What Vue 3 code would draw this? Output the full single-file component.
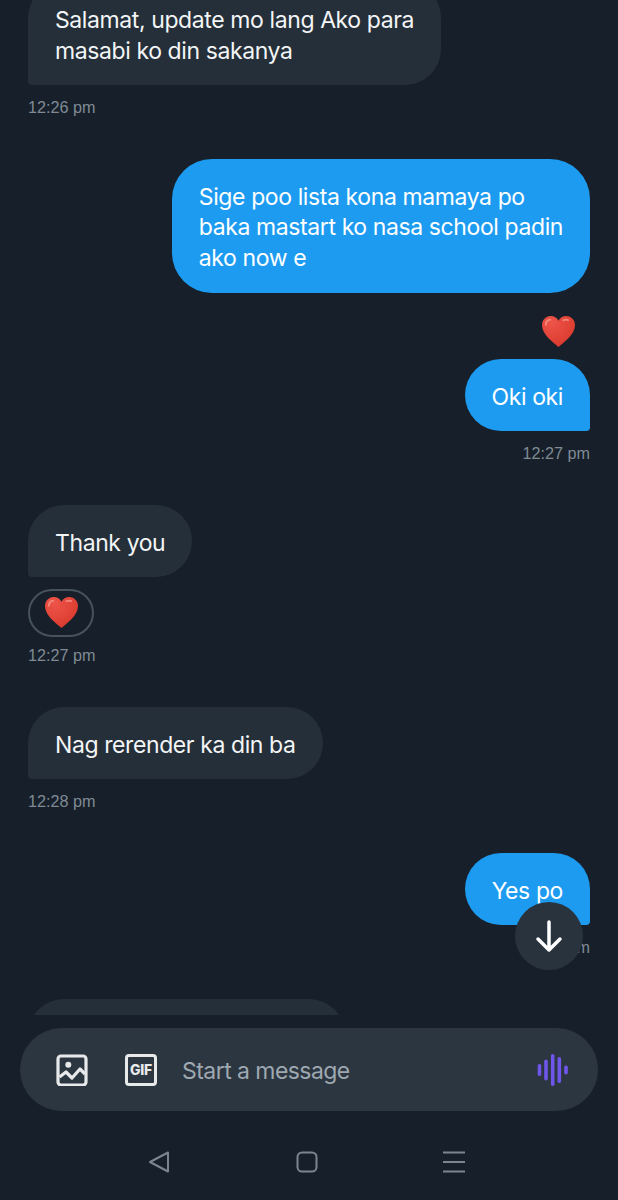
<script setup>
const messages = [
  { id: 1, side: 'in', lines: ['Salamat, update mo lang Ako para', 'masabi ko din sakanya'], time: '12:26 pm', cls: 'first' },
  { id: 2, side: 'out', lines: ['Sige poo lista kona mamaya po', 'baka mastart ko nasa school padin', 'ako now e'], round: true },
  { id: 3, side: 'out', lines: ['Oki oki'], time: '12:27 pm', heartAbove: true },
  { id: 4, side: 'in', lines: ['Thank you'], time: '12:27 pm', pill: true },
  { id: 5, side: 'in', lines: ['Nag rerender ka din ba'], time: '12:28 pm' },
  { id: 6, side: 'out', lines: ['Yes po'], time: '12:28 pm' },
]
const bars = [
  { x: 2.5, h: 12 },
  { x: 9, h: 21 },
  { x: 15.700, h: 32 },
  { x: 22.300, h: 26 },
  { x: 29, h: 9 },
]
</script>

<template>
  <div class="screen">
    <div class="thread">
      <div
        v-for="m in messages"
        :key="m.id"
        class="msg"
        :class="[m.side, m.cls]"
      >
        <svg v-if="m.heartAbove" class="heart above" viewBox="0 0 36 34"><use href="#heart" /></svg>
        <div class="bubble" :class="{ round: m.round }">
          <div v-for="l in m.lines" :key="l">{{ l }}</div>
        </div>
        <div v-if="m.pill" class="pill">
          <svg class="heart" viewBox="0 0 36 34"><use href="#heart" /></svg>
        </div>
        <div v-if="m.time" class="time">{{ m.time }}</div>
      </div>
      <div class="bubble partial"></div>
    </div>

    <button class="scroll-down" aria-label="Scroll down">
      <svg width="30" height="34" viewBox="0 0 30 34" fill="none" stroke="#fff" stroke-width="3.500" stroke-linecap="round" stroke-linejoin="round">
        <path d="M15 3V31M4 20L15 31L26 20" />
      </svg>
    </button>

    <div class="composer">
      <svg class="icon" width="32" height="32" viewBox="0 0 32 32" fill="none" stroke="#e7e9ea" stroke-width="3.200" stroke-linejoin="round">
        <rect x="2" y="2" width="28" height="29" rx="3" />
        <circle cx="12.300" cy="10.700" r="3" fill="#e7e9ea" stroke="none" />
        <path d="M3.500 23L10 18L16 24L24 15L29 20" />
      </svg>
      <div class="gif"><span>GIF</span></div>
      <div class="placeholder">Start a message</div>
      <svg class="voice" width="32" height="36" viewBox="0 0 32 36" fill="none" stroke="#6f56ea" stroke-width="3.600" stroke-linecap="round">
        <line v-for="b in bars" :key="b.x" :x1="b.x" :x2="b.x" :y1="18 - b.h / 2 + 1.800" :y2="18 + b.h / 2 - 1.800" />
      </svg>
    </div>

    <div class="navbar">
      <svg width="24" height="24" viewBox="0 0 24 24" fill="none" stroke="#7c858e" stroke-width="2" stroke-linejoin="round">
        <path d="M21 2.500V21.500L3 12Z" />
      </svg>
      <svg width="24" height="24" viewBox="0 0 24 24" fill="none" stroke="#7c858e" stroke-width="2">
        <rect x="2.500" y="2.500" width="19" height="19" rx="4.500" />
      </svg>
      <svg width="24" height="24" viewBox="0 0 24 24" fill="none" stroke="#7c858e" stroke-width="2">
        <path d="M1 2.500H23M1 12H23M1 21.500H23" />
      </svg>
    </div>

    <svg class="defs" width="0" height="0">
      <defs>
        <radialGradient id="heartFill" cx="0.3" cy="0.2" r="0.9">
          <stop offset="0" stop-color="#ee5448" />
          <stop offset="1" stop-color="#d9382c" />
        </radialGradient>
        <symbol id="heart" viewBox="0 0 36 34">
          <path d="M18 33C12 27.500 1 20 1 10.500C1 4.500 5.500 1 10 1C13.500 1 16.500 3 18 6C19.500 3 22.500 1 26 1C30.500 1 35 4.500 35 10.500C35 20 24 27.500 18 33Z" fill="url(#heartFill)" />
          <path d="M5 10C5 7 7 5 9.500 4.800" fill="none" stroke="#f3867b" stroke-width="2" stroke-linecap="round" />
          <path d="M23 5.500C24.500 4.700 26.500 4.600 28 5.300" fill="none" stroke="#f3867b" stroke-width="1.800" stroke-linecap="round" />
        </symbol>
      </defs>
    </svg>
  </div>
</template>

<style>
body {
  background: #17202a;
}
</style>

<style scoped>
.screen {
  position: relative;
  width: 618px;
  height: 1200px;
  display: flex;
  flex-direction: column;
  overflow: hidden;
  background: #17202a;
  font-family: Inter, "Liberation Sans", sans-serif;
}
.thread {
  height: 1015px;
  padding: 0 28px;
  box-sizing: border-box;
  overflow: hidden;
  flex-shrink: 0;
}
.msg {
  display: flex;
  flex-direction: column;
  margin-bottom: 42px;
}
.msg.first {
  margin-top: -18px;
}
.msg.in {
  align-items: flex-start;
}
.msg.out {
  align-items: flex-end;
}
.msg:has(.round) {
  margin-bottom: 21px;
}
.bubble {
  padding: 23px 27px 18.500px;
  font-size: 23px;
  letter-spacing: -0.4px;
  line-height: 30.500px;
  color: #f3f5f6;
  white-space: nowrap;
}
.in .bubble {
  background: #252f39;
  border-radius: 36px 36px 36px 4px;
}
.out .bubble {
  background: #1d9bf0;
  color: #fff;
  border-radius: 36px 36px 4px 36px;
}
.out .bubble.round {
  padding-bottom: 19.500px;
  border-radius: 40px;
}
.bubble.partial {
  width: 317px;
  height: 72px;
  padding: 0;
  background: #252f39;
  border-radius: 36px;
}
.time {
  margin-top: 12px;
  font-size: 16.200px;
  line-height: 20px;
  color: #7f8a94;
  font-family: "Liberation Sans", sans-serif;
}
.heart {
  width: 35px;
  height: 33px;
  display: block;
}
.heart.above {
  margin: 1px 14px 11px 0;
}
.pill {
  margin-top: 12px;
  width: 66px;
  height: 48px;
  box-sizing: border-box;
  border: 2px solid #46525d;
  border-radius: 24px;
  display: flex;
  align-items: center;
  justify-content: center;
}
.pill + .time {
  margin-top: 8px;
}
.scroll-down {
  position: absolute;
  left: 515px;
  top: 902px;
  width: 68px;
  height: 68px;
  border: none;
  border-radius: 50%;
  background: #29333e;
  display: flex;
  align-items: center;
  justify-content: center;
  padding: 0;
}
.composer {
  margin: 13px 20px 0;
  height: 83px;
  flex-shrink: 0;
  background: #2c3640;
  border-radius: 41.500px;
  display: flex;
  align-items: center;
  padding: 0 29px 0 36px;
}
.gif {
  margin-left: 37px;
  width: 32px;
  height: 32px;
  box-sizing: border-box;
  border: 3px solid #e7e9ea;
  border-radius: 4px;
  display: flex;
  align-items: center;
  justify-content: center;
}
.gif span {
  font-size: 14px;
  font-weight: 800;
  color: #e7e9ea;
  letter-spacing: -0.3px;
}
.placeholder {
  margin-left: 25px;
  padding-top: 2px;
  flex: 1;
  font-size: 23px;
  letter-spacing: -0.55px;
  color: #9ea8b1;
}
.navbar {
  flex: 1;
  display: flex;
  align-items: flex-start;
  justify-content: center;
  gap: 123.500px;
  padding: 39px 5px 0 0;
}
.defs {
  position: absolute;
}
</style>
